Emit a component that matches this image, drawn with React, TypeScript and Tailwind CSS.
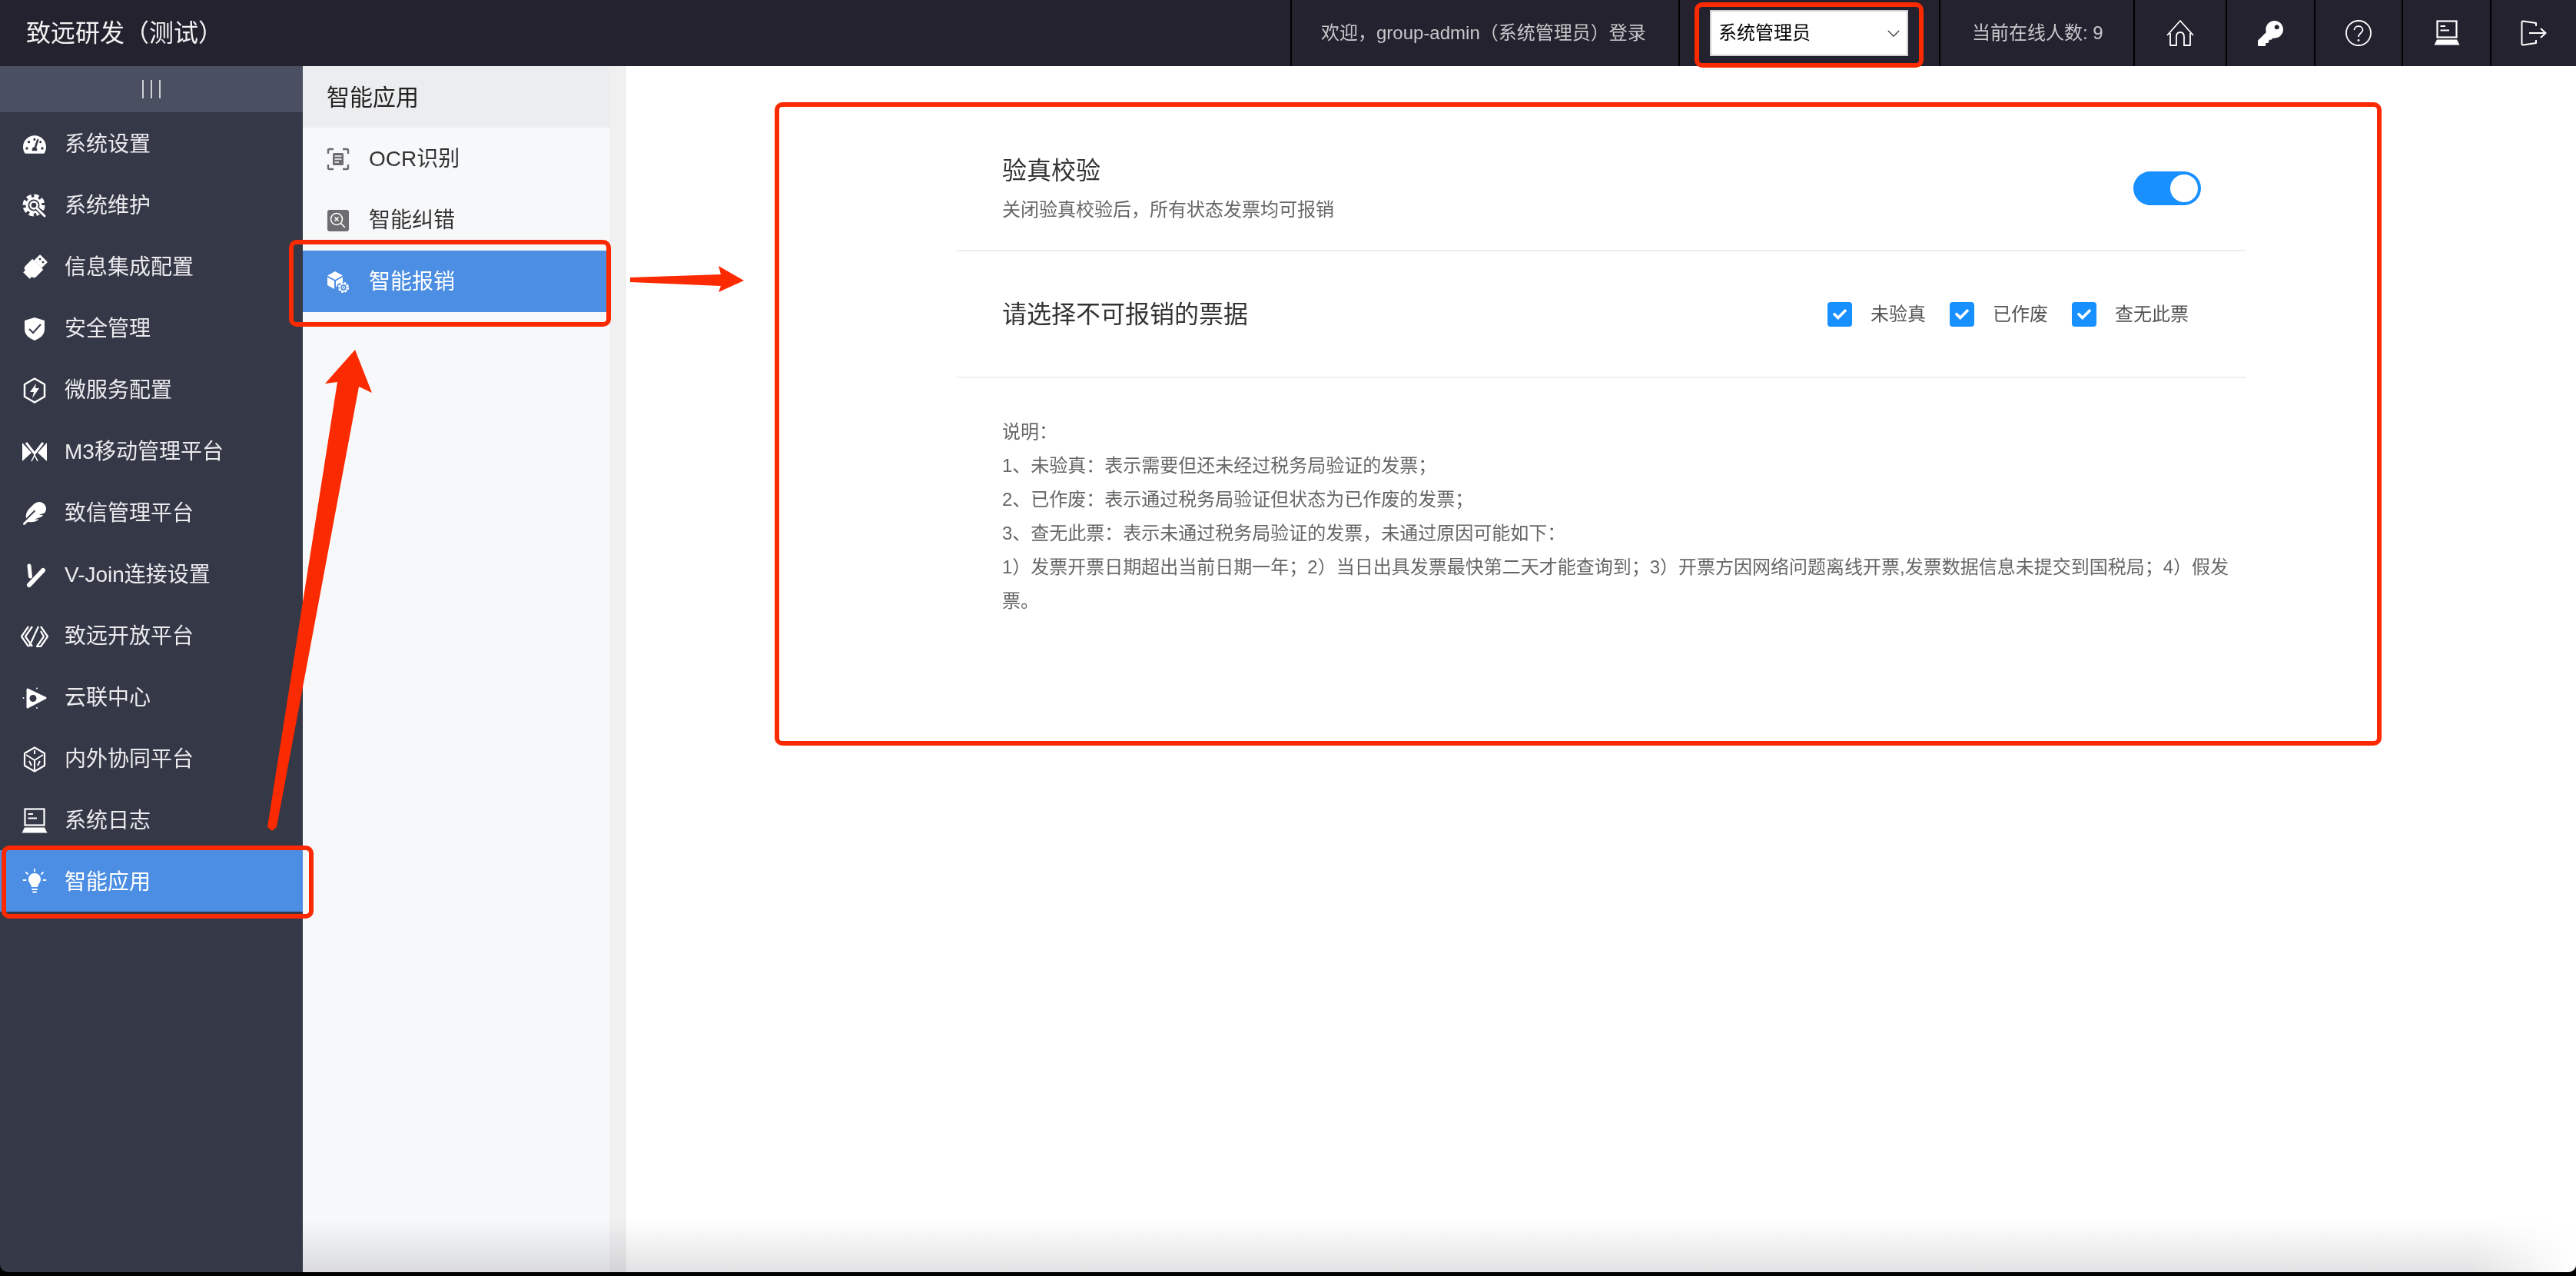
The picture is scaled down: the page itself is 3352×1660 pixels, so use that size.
import type { ReactNode } from "react";
import { FaCheck, FaFeather, FaKey, FaTachometerAlt } from "react-icons/fa";

const Icon = ({ children, className = "w-9 h-9" }: { children: ReactNode; className?: string }) => (
  <svg viewBox="0 0 36 36" className={className}>
    {children}
  </svg>
);

const GearIcon = () => (
  <Icon>
    <circle cx="17" cy="17" r="12" fill="none" stroke="white" strokeWidth="5" strokeDasharray="6 3.42" />
    <circle cx="17" cy="17" r="9" fill="none" stroke="white" strokeWidth="3" />
    <circle cx="17" cy="17" r="4.5" fill="none" stroke="white" strokeWidth="2.5" />
    <path d="M21 21 L31 31" stroke="#353847" strokeWidth="6" />
    <path d="M21 21 L31 31" stroke="white" strokeWidth="3" strokeLinecap="round" />
  </Icon>
);

const PlugIcon = () => (
  <Icon>
    <g transform="rotate(45 18 18)">
      <rect x="11" y="1" width="14" height="11" rx="1" fill="white" />
      <rect x="14" y="4" width="2.5" height="2.5" fill="#353847" />
      <rect x="19.5" y="4" width="2.5" height="2.5" fill="#353847" />
      <path d="M8 12 H28 V25 Q28 29 24 29 V33 H12 V29 Q8 29 8 25 Z" fill="white" />
    </g>
  </Icon>
);

const ShieldIcon = () => (
  <Icon>
    <path d="M18 3 L31 7 V18 C31 26 25 30 18 33 C11 30 5 26 5 18 V7 Z" fill="white" />
    <path d="M11 18 L16 23 L26 12" fill="none" stroke="#353847" strokeWidth="2" />
  </Icon>
);

const BoltHexIcon = () => (
  <Icon>
    <polygon points="18,2.5 31,10 31,26 18,33.5 5,26 5,10" fill="none" stroke="white" strokeWidth="2.5" strokeLinejoin="round" />
    <polygon points="20,9 12,20 17,20 15,28 24,15 19,15" fill="white" />
  </Icon>
);

const MIcon = () => (
  <Icon>
    <polygon points="2,6 14,19 2,30" fill="white" />
    <polygon points="34,6 22,19 34,30" fill="white" />
    <path d="M7 6 L18 20 L29 6" fill="none" stroke="white" strokeWidth="3" />
    <path d="M14 30 L18 22 L22 30" fill="none" stroke="white" strokeWidth="1.5" />
  </Icon>
);

const VIcon = () => (
  <Icon>
    <path d="M11 6 L12.5 20" stroke="white" strokeWidth="5" strokeLinecap="round" />
    <path d="M29 12 L11 31" stroke="white" strokeWidth="6" strokeLinecap="round" />
  </Icon>
);

const CodeIcon = () => (
  <Icon>
    <g fill="none" stroke="white" strokeWidth="2.2" strokeLinejoin="round">
      <path d="M10 5 L1 18 L10 31" />
      <path d="M15 5 L6 18 L15 31" />
      <path d="M23 5 L11 31" />
      <path d="M26 5 L35 18 L26 31 H21 L30 18 L26 11" />
    </g>
  </Icon>
);

const CloudIcon = () => (
  <Icon>
    <path d="M9 7 L32 18 L9 30 Z" fill="white" stroke="white" strokeWidth="3" strokeLinejoin="round" />
    <circle cx="16" cy="18.5" r="4.5" fill="#353847" />
    <circle cx="3.5" cy="18" r="1" fill="white" />
    <circle cx="21" cy="5.5" r="1" fill="white" />
    <circle cx="21" cy="31" r="1" fill="white" />
  </Icon>
);

const HexIcon = () => (
  <Icon>
    <polygon points="18,2.5 31,10 31,26 18,33.5 5,26 5,10" fill="none" stroke="white" strokeWidth="2.2" strokeLinejoin="round" />
    <path d="M18 19 V32 M18 19 L7 12 M18 19 L29 12 M11 20 L14 26 M25 20 L22 26 M18 6 V11" fill="none" stroke="white" strokeWidth="2" />
  </Icon>
);

const LaptopShape = () => (
  <>
    <rect x="5.5" y="2.5" width="25" height="21" fill="none" stroke="white" strokeWidth="2.2" />
    <path d="M9.5 9 H16 M9.5 14.5 H21" stroke="white" strokeWidth="2" />
    <polygon points="5,26.5 31,26.5 34.5,33.5 1.5,33.5" fill="white" />
  </>
);

const LaptopIcon = () => (
  <Icon>
    <LaptopShape />
  </Icon>
);

const BulbIcon = () => (
  <Icon>
    <path d="M18 6 C12.5 6 10 10.5 10 14 C10 18 13.5 20 14 24 H22 C22.5 20 26 18 26 14 C26 10.5 23.5 6 18 6 Z" fill="white" />
    <path d="M15 27 H21 M16 30.5 H20" stroke="white" strokeWidth="2" strokeLinecap="round" />
    <path d="M18 1 V3.5 M7 5 L9 7 M29 5 L27 7 M3.5 15 H6.5 M29.5 15 H32.5" stroke="white" strokeWidth="1.8" strokeLinecap="round" />
  </Icon>
);

const HomeIcon = () => (
  <Icon className="w-9 h-9">
    <path
      d="M1 21 L18 2 L35 21 M5 18 V34 H13 V23 Q13 17 18 17 Q23 17 23 23 V34 H31 V18"
      fill="none"
      stroke="white"
      strokeWidth="1.8"
      strokeLinejoin="round"
    />
  </Icon>
);

const HelpIcon = () => (
  <Icon className="w-9 h-9">
    <circle cx="18" cy="18" r="16" fill="none" stroke="white" strokeWidth="1.8" />
    <path d="M12.5 14 C12.5 7.5 23.5 7.5 23.5 14 C23.5 18 18 18 18 23" fill="none" stroke="white" strokeWidth="1.8" />
    <circle cx="18" cy="27.5" r="1.4" fill="white" />
  </Icon>
);

const LogoutIcon = () => (
  <Icon className="w-9 h-9">
    <path
      d="M21 9 V5 L4 2.5 Q2.5 2.5 2.5 4 V32 Q2.5 33.5 4 33.5 L21 31 V27"
      fill="none"
      stroke="white"
      strokeWidth="2"
      strokeLinejoin="round"
    />
    <path d="M12 18 H33 M27 12 L33.5 18 L27 24" fill="none" stroke="white" strokeWidth="2" />
  </Icon>
);

const OcrIcon = () => (
  <svg viewBox="0 0 30 30" className="w-[30px] h-[30px]">
    <path
      d="M9 2 H3.5 Q2 2 2 3.5 V8 M21 2 H26.5 Q28 2 28 3.5 V8 M9 28 H3.5 Q2 28 2 26.5 V22 M21 28 H26.5 Q28 28 28 26.5 V22"
      fill="none"
      stroke="#6d6d70"
      strokeWidth="2.4"
    />
    <rect x="8" y="7" width="14" height="16" rx="1.5" fill="#6d6d70" />
    <path d="M10.5 11 H19.5 M10.5 15 H19.5 M10.5 19 H16" stroke="#f7f8fa" strokeWidth="1.5" />
  </svg>
);

const SearchXIcon = () => (
  <svg viewBox="0 0 30 30" className="w-[30px] h-[30px]">
    <rect x="1" y="1" width="28" height="28" rx="3" fill="#6d6d70" />
    <circle cx="13" cy="13" r="7.5" fill="none" stroke="white" strokeWidth="1.6" />
    <path d="M10.5 10.5 L15.5 15.5 M15.5 10.5 L10.5 15.5 M18.5 18.5 L24 24" stroke="white" strokeWidth="1.6" />
  </svg>
);

const CubeIcon = () => (
  <svg viewBox="0 0 30 30" className="w-[30px] h-[30px]">
    <polygon points="11,1 21,6.5 11,12 1,6.5" fill="white" />
    <polygon points="1,8.5 10,13.5 10,24 1,19" fill="white" />
    <polygon points="12,13.5 21,8.5 21,15 15,17 12,22" fill="white" />
    <circle cx="22" cy="22" r="5.5" fill="none" stroke="white" strokeWidth="3.2" strokeDasharray="2.6 1.7" />
    <circle cx="22" cy="22" r="4.6" fill="none" stroke="white" strokeWidth="1.4" />
    <circle cx="22" cy="22" r="1.6" fill="none" stroke="white" strokeWidth="1" />
  </svg>
);

const menu: { label: string; icon: ReactNode; active?: boolean }[] = [
  { label: "系统设置", icon: <FaTachometerAlt className="w-[30px] h-[30px] text-white" /> },
  { label: "系统维护", icon: <GearIcon /> },
  { label: "信息集成配置", icon: <PlugIcon /> },
  { label: "安全管理", icon: <ShieldIcon /> },
  { label: "微服务配置", icon: <BoltHexIcon /> },
  { label: "M3移动管理平台", icon: <MIcon /> },
  { label: "致信管理平台", icon: <FaFeather className="w-[30px] h-[30px] text-white" /> },
  { label: "V-Join连接设置", icon: <VIcon /> },
  { label: "致远开放平台", icon: <CodeIcon /> },
  { label: "云联中心", icon: <CloudIcon /> },
  { label: "内外协同平台", icon: <HexIcon /> },
  { label: "系统日志", icon: <LaptopIcon /> },
  { label: "智能应用", icon: <BulbIcon />, active: true },
];

const subMenu: { label: string; icon: ReactNode; active?: boolean }[] = [
  { label: "OCR识别", icon: <OcrIcon /> },
  { label: "智能纠错", icon: <SearchXIcon /> },
  { label: "智能报销", icon: <CubeIcon />, active: true },
];

const toolIcons: { width: string; icon: ReactNode }[] = [
  { width: "w-[120px]", icon: <HomeIcon /> },
  { width: "w-[115px]", icon: <FaKey className="w-[33px] h-[33px] text-white" /> },
  { width: "w-[114px]", icon: <HelpIcon /> },
  { width: "w-[115px]", icon: <Icon className="w-9 h-9"><LaptopShape /></Icon> },
  { width: "w-[112px]", icon: <LogoutIcon /> },
];

const notes = [
  "说明：",
  "1、未验真：表示需要但还未经过税务局验证的发票；",
  "2、已作废：表示通过税务局验证但状态为已作废的发票；",
  "3、查无此票：表示未通过税务局验证的发票，未通过原因可能如下：",
  "1）发票开票日期超出当前日期一年；2）当日出具发票最快第二天才能查询到；3）开票方因网络问题离线开票,发票数据信息未提交到国税局；4）假发票。",
];

function Header() {
  return (
    <header className="h-[86px] shrink-0 flex bg-[#24222e]">
      <div className="flex-1 flex items-center pl-[34px] text-[32px] text-[#f2f2f3]">致远研发（测试）</div>
      <div className="w-[505px] flex items-center pl-[38px] text-[24px] text-[#c8c8cb] border-l-2 border-black">
        欢迎，group-admin（系统管理员）登录
      </div>
      <div className="w-[339px] flex items-center pl-[39px] border-l-2 border-black">
        <div className="w-[258px] h-[60px] bg-white border-2 border-[#cfcfd2] flex items-center justify-between pl-[9px] pr-[8px] text-[24px] text-black">
          <span>系统管理员</span>
          <svg viewBox="0 0 20 12" className="w-[18px] h-[11px]">
            <path d="M2 2 L10 10 L18 2" fill="none" stroke="#222" strokeWidth="1.4" />
          </svg>
        </div>
      </div>
      <div className="w-[253px] flex items-center pl-[41px] text-[24px] text-[#c8c8cb] border-l-2 border-black">
        当前在线人数: 9
      </div>
      {toolIcons.map((tool, i) => (
        <div key={i} className={`${tool.width} flex items-center justify-center border-l-2 border-black`}>
          {tool.icon}
        </div>
      ))}
    </header>
  );
}

function Sidebar() {
  return (
    <aside className="w-[394px] shrink-0 bg-[#353847]">
      <div className="h-[60px] bg-[#4a4f61] flex items-center justify-center gap-[9px]">
        <span className="w-[2px] h-[24px] bg-[#cfd0d6]" />
        <span className="w-[2px] h-[24px] bg-[#cfd0d6]" />
        <span className="w-[2px] h-[24px] bg-[#cfd0d6]" />
      </div>
      {menu.map((item) => (
        <div
          key={item.label}
          className={`h-[80px] flex items-center pt-[3px] pl-[27px] gap-[21px] text-[28px] ${
            item.active ? "bg-[#4b8ee3] text-white" : "text-[#ebebee]"
          }`}
        >
          <span className="w-9 h-9 flex items-center justify-center">{item.icon}</span>
          {item.label}
        </div>
      ))}
    </aside>
  );
}

function SubMenu() {
  return (
    <nav className="w-[421px] shrink-0 flex">
      <div className="w-[399px] bg-[#f7f8fa]">
        <div className="h-[80px] bg-[#ecedef] flex items-center pl-[31px] text-[30px] text-[#222]">智能应用</div>
        {subMenu.map((item) => (
          <div
            key={item.label}
            className={`h-[80px] flex items-center pt-[2px] pl-[31px] gap-[25px] text-[28px] ${
              item.active ? "bg-[#4b8ee3] text-white" : "text-[#333]"
            }`}
          >
            {item.icon}
            {item.label}
          </div>
        ))}
      </div>
      <div className="flex-1 bg-[#f0f0f1]" />
    </nav>
  );
}

function Check({ label }: { label: string }) {
  return (
    <div className="flex items-center gap-[24px] text-[24px] text-[#555]">
      <span className="w-[32px] h-[32px] rounded-[4px] bg-[#1890ff] flex items-center justify-center">
        <FaCheck className="w-[18px] h-[18px] text-white" />
      </span>
      {label}
    </div>
  );
}

function Content() {
  return (
    <main className="flex-1 bg-white pl-[430px]">
      <div className="w-[1678px]">
        <div className="h-[241px] pt-[114px] px-[59px] flex justify-between border-b-2 border-[#eeeeee]">
          <div>
            <div className="text-[32px] leading-[44px] text-[#333]">验真校验</div>
            <div className="mt-[11px] text-[24px] leading-[36px] text-[#666]">关闭验真校验后，所有状态发票均可报销</div>
          </div>
          <div className="w-[88px] h-[44px] mt-[23px] rounded-full bg-[#1890ff] flex items-center justify-end pr-[4px]">
            <span className="w-[36px] h-[36px] rounded-full bg-white" />
          </div>
        </div>
        <div className="h-[165px] pl-[59px] pr-[75px] flex items-center justify-between border-b-2 border-[#eeeeee]">
          <div className="text-[32px] text-[#333]">请选择不可报销的票据</div>
          <div className="flex gap-[31px]">
            <Check label="未验真" />
            <Check label="已作废" />
            <Check label="查无此票" />
          </div>
        </div>
        <div className="pt-[48px] pl-[59px] pr-[13px] text-[24px] leading-[44px] text-[#666]">
          {notes.map((line) => (
            <p key={line}>{line}</p>
          ))}
        </div>
      </div>
    </main>
  );
}

// red markup drawn on top of the screenshot
function Annotations() {
  return (
    <>
      <div className="absolute left-[2px] top-[1100px] w-[406px] h-[95px] border-[6px] border-[#fc2a00] rounded-[10px]" />
      <div className="absolute left-[376px] top-[312px] w-[419px] h-[113px] border-[6px] border-[#fc2a00] rounded-[10px]" />
      <div className="absolute left-[1008px] top-[133px] w-[2091px] h-[837px] border-[6px] border-[#fc2a00] rounded-[10px]" />
      <div className="absolute left-[2205px] top-[3px] w-[298px] h-[85px] border-[6px] border-[#fc2a00] rounded-[10px]" />
      <svg viewBox="0 0 3352 1660" className="absolute inset-0 w-[3352px] h-[1660px] pointer-events-none">
        <polygon points="348,1076 439,497 423,499 462,455 484,511 467,503 360,1076 354,1081" fill="#fc2a00" />
        <polygon points="820,361 938,357 935,346 968,365 935,380 938,372 820,367" fill="#fc2a00" />
      </svg>
    </>
  );
}

export default function App() {
  return (
    <div
      lang="zh-CN"
      className="relative w-[3352px] h-[1660px] overflow-hidden bg-black font-['Liberation_Sans','Noto_Sans_CJK_SC',sans-serif]"
    >
      <div className="relative h-[1655px] flex flex-col overflow-hidden rounded-b-[10px]">
        <Header />
        <div className="flex-1 flex min-h-0">
          <Sidebar />
          <SubMenu />
          <Content />
        </div>
        {/* window shadow along the bottom edge */}
        <div className="absolute left-[394px] right-0 bottom-0 h-[68px] bg-linear-to-b from-transparent to-[#e2e2e4] mix-blend-multiply" />
        <div className="absolute right-0 bottom-0 w-[140px] h-[68px] bg-linear-to-l from-white to-transparent" />
      </div>
      <Annotations />
    </div>
  );
}
